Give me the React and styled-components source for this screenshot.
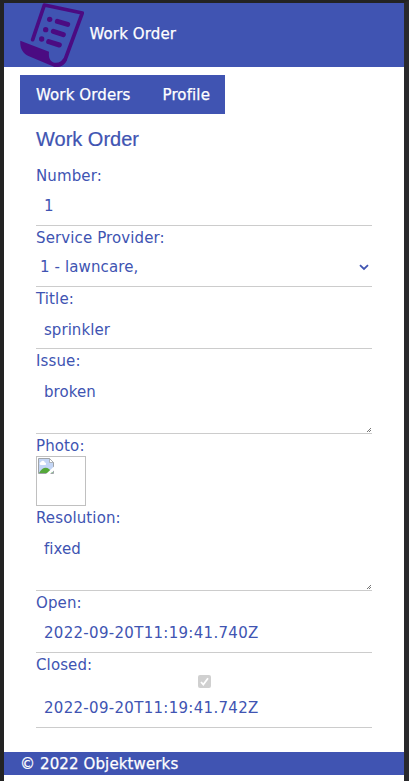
import React from 'react';
import styled, { createGlobalStyle } from 'styled-components';

const blue = '#4054b2';
const bodyFont = 'Verdana, "DejaVu Sans", sans-serif';

const GlobalStyle = createGlobalStyle`
  * { box-sizing: border-box; }
  body { margin: 0; background: #fff; overflow: hidden; }
`;

const Window = styled.div`
  height: 781px;
  border: solid #232323;
  border-width: 3px 5px 0 4px;
  border-right-color: #29292c;
  background: #fff;
  color: ${blue};
  font: 15px/22px ${bodyFont};
  letter-spacing: 0.12px;
`;

const Header = styled.header`
  display: flex;
  align-items: center;
  gap: 5.5px;
  height: 64px;
  padding: 0 16px;
  background: ${blue};
  color: #fff;
  -webkit-text-stroke: 0.25px #fff;
`;

const HeaderTitle = styled.span`
  padding-bottom: 2px;
`;

const Logo = styled.svg`
  display: block;
  width: 64px;
  height: 64px;
`;

const Nav = styled.nav`
  display: flex;
  width: 205px;
  height: 39px;
  margin: 8px 0 0 16px;
  background: ${blue};
`;

const NavItem = styled.a`
  padding: 9px 16px 8px;
  color: #fff;
  white-space: nowrap;
  -webkit-text-stroke: 0.25px #fff;
`;

const Form = styled.form`
  display: flex;
  flex-direction: column;
  height: 638px;
  padding: 10px 32px 0;
`;

const Heading = styled.h1`
  height: 30px;
  margin: 0 0 10px;
  font: 400 20px/30px "Liberation Sans", Arial, sans-serif;
  letter-spacing: 0;
  -webkit-text-stroke: 0.2px ${blue};
`;

const Label = styled.label`
  height: 22px;
  line-height: 24px;
`;

const Input = styled.input`
  width: 100%;
  height: 40px;
  padding: ${(p) => (p.$low ? '10px 8px 8px' : '8px')};
  border: 0;
  border-bottom: 1px solid #ccc;
  outline: 0;
  background: transparent;
  color: inherit;
  font: inherit;
  letter-spacing: ${(p) => (p.$stamp ? '0.3px' : '0.05px')};
`;

const SelectBox = styled.div`
  display: flex;
  align-items: center;
  justify-content: space-between;
  height: 39px;
  padding: 0 3px 0 4px;
  border-bottom: 1px solid #ccc;
`;

const Chevron = styled.svg`
  width: 10px;
  height: 7px;
`;

const TextArea = styled.div`
  display: flex;
  justify-content: space-between;
  align-items: flex-end;
  height: 63px;
  border-bottom: 1px solid #ccc;
`;

const TextValue = styled.span`
  align-self: flex-start;
  padding: 10px 8px 8px;
  letter-spacing: 0.05px;
`;

const Grip = styled.svg`
  width: 5px;
  height: 5px;
`;

const Photo = styled.div`
  width: 50px;
  height: 50px;
  padding: 1px;
  border: 1px solid #c0c0c0;
`;

const BrokenImage = styled.svg`
  display: block;
  width: 16px;
  height: 16px;
`;

const Check = styled.svg`
  align-self: center;
  width: 13px;
  height: 13px;
`;

const Footer = styled.footer`
  height: 23px;
  padding: 1px 16px 0;
  background: ${blue};
  color: #fff;
  -webkit-text-stroke: 0.25px #fff;
`;

function WorkOrderLogo() {
  return (
    <Logo viewBox="60 9 192 192" fill="#4b0b82" stroke="none">
      <path
        d="M98 119L133 15L247 39L196 177C190 190 178 196 166 196"
        fill="none"
        stroke="#4b0b82"
        strokeWidth="11"
        strokeLinejoin="round"
        strokeLinecap="round"
      />
      <path d="M61 122L147 155C145 173 150 185 163 188C176 190 186 184 190 175L201 180C193 197 178 203 162 200L87 169C68 161 59 143 61 122Z" />
      <circle cx="149" cy="58" r="8" />
      <circle cx="137" cy="89" r="8" />
      <circle cx="125" cy="117" r="8" />
      <path d="M172 64L203 73M160 94L190 104M146 125L178 135" stroke="#4b0b82" strokeWidth="15" strokeLinecap="round" />
    </Logo>
  );
}

function TextBlock({ children }) {
  return (
    <TextArea>
      <TextValue>{children}</TextValue>
      <Grip viewBox="0 0 5 5" fill="#777" shapeRendering="crispEdges">
        <path d="M3 0h1v1h-1zM2 1h1v1h-1zM1 2h1v1h-1zM0 3h1v1h-1zM3 2h1v1h-1zM2 3h1v1h-1z" />
      </Grip>
    </TextArea>
  );
}

export default function App() {
  return (
    <Window>
      <GlobalStyle />
      <Header>
        <WorkOrderLogo />
        <HeaderTitle>Work Order</HeaderTitle>
      </Header>
      <Nav>
        <NavItem>Work Orders</NavItem>
        <NavItem>Profile</NavItem>
      </Nav>
      <Form>
        <Heading>Work Order</Heading>
        <Label>Number:</Label>
        <Input readOnly value="1" />
        <Label>Service Provider:</Label>
        <SelectBox>
          <span>1 - lawncare,</span>
          <Chevron viewBox="0 0 10 7">
            <path d="M1 1.2L5 5L9 1.2" fill="none" stroke={blue} strokeWidth="1.8" />
          </Chevron>
        </SelectBox>
        <Label>Title:</Label>
        <Input readOnly $low value="sprinkler" />
        <Label>Issue:</Label>
        <TextBlock>broken</TextBlock>
        <Label>Photo:</Label>
        <Photo>
          <BrokenImage viewBox="0 0 16 16">
            <path d="M.5.5h11l4 4v11H.5z" fill="#c3d5f5" stroke="#a0a4a8" />
            <path d="M11.5.5v4h4z" fill="#fff" stroke="#a0a4a8" strokeWidth=".8" />
            <path d="M12.200 0L16 4V0z" fill="#fff" />
            <path d="M2.5 7a1.6 1.6 0 0 1 .5-3a2 2 0 0 1 3.8.5a1.3 1.3 0 0 1 .5 2.5z" fill="#fff" />
            <path d="M1 15C4 9.500 8 8.500 11 11L15 15z" fill="#55a83a" />
            <path d="M16 8.500L8 16H12L16 12.500z" fill="#fff" />
          </BrokenImage>
        </Photo>
        <Label>Resolution:</Label>
        <TextBlock>fixed</TextBlock>
        <Label>Open:</Label>
        <Input readOnly $stamp value="2022-09-20T11:19:41.740Z" />
        <Label>Closed:</Label>
        <Check viewBox="0 0 13 13">
          <rect width="13" height="13" rx="2" fill="#d0d0d0" />
          <path d="M3 7L5.300 9.500L10 3.300" fill="none" stroke="#fff" strokeWidth="1.800" />
        </Check>
        <Input readOnly $stamp value="2022-09-20T11:19:41.742Z" />
      </Form>
      <Footer>© 2022 Objektwerks</Footer>
    </Window>
  );
}
